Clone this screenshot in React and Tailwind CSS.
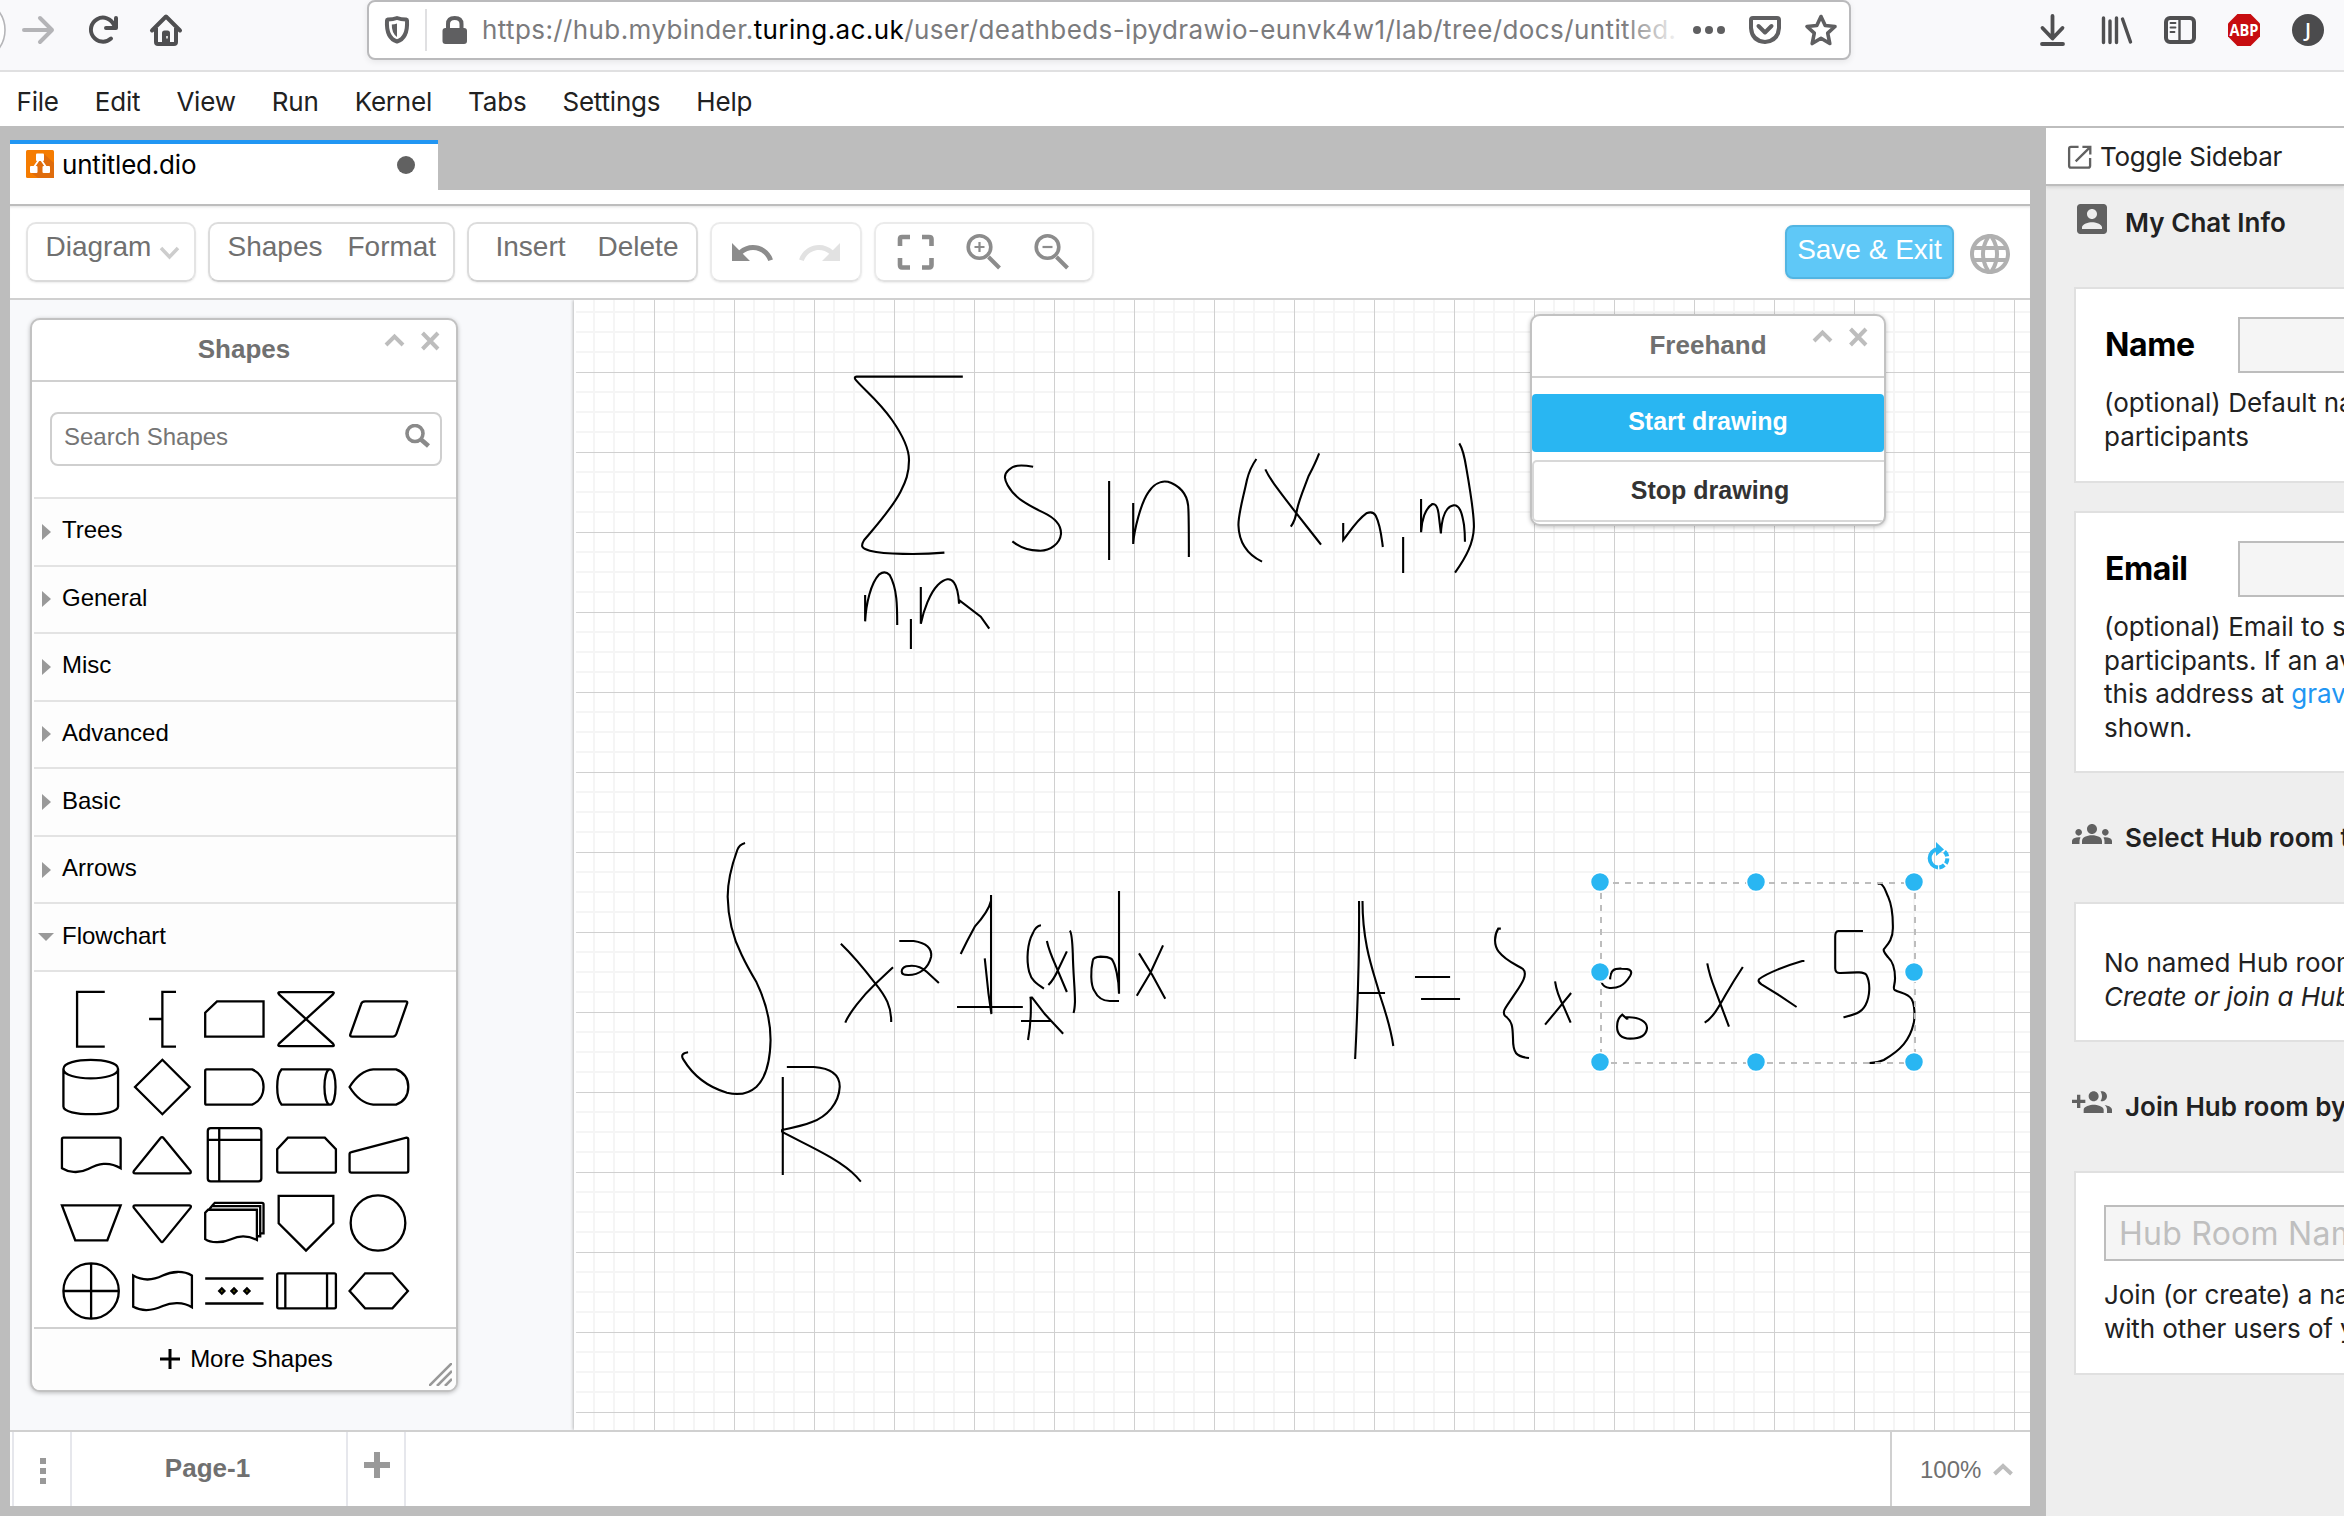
import React from "react";

const MENU = ["File", "Edit", "View", "Run", "Kernel", "Tabs", "Settings", "Help"];
const SECTIONS = ["Trees", "General", "Misc", "Advanced", "Basic", "Arrows", "Flowchart"];

const SHAPES = [
  "M40 -74H-35V75H40",
  "M38 -74H1V75H38M-35 0H1",
  "M-46 -48H80V48H-78V-17Z",
  "M-70 -73H72Q78 -73 73 -67L-73 67Q-78 74 -70 74H72Q78 74 73 67L-73 -67Q-78 -73 -70 -73Z",
  "M-35 -48H75Q80 -48 79 -43L50 40Q47 48 40 48H-70Q-77 48 -75 42L-46 -40Q-44 -48 -35 -48Z",
  "M-72 -49V53C-72 81 76 81 76 53V-49C76 -15 -72 -15 -72 -49C-72 -82 76 -82 76 -49",
  "M1 -74L75 0L1 74L-73 0Z",
  "M-74 -48H49C68 -40 80 -22 80 0S68 40 49 48H-74Q-78 48 -78 44V-44Q-78 -48 -74 -48Z",
  "M65 -48H-66C-82 -30 -82 30 -66 48H65C45 48 45 -48 65 -48C85 -48 85 48 65 48",
  "M-77 0Q-50 -44 -13 -48H49C70 -40 82 -22 82 0S70 40 49 48H-13Q-50 44 -77 0Z",
  "M-76 36V-43Q-76 -47 -72 -47H79Q83 -47 83 -43V36C50 16 22 24 -5 38S-60 46 -76 36Z",
  "M-4 -46Q0 -51 4 -46L77 43Q80 50 74 50H-72Q-80 50 -76 43Z",
  "M-63 -73H66Q74 -73 74 -65V64Q74 72 66 72H-63Q-71 72 -71 64V-65Q-71 -73 -63 -73ZM-40 -73V72M-71 -41H74",
  "M-49 -47H51L81 -16V44Q81 48 76 48H-73Q-78 48 -78 43V-16Z",
  "M-72 -8L77 -47Q82 -47 82 -42V43Q82 48 77 48H-72Q-77 48 -77 43V-2Q-77 -7 -72 -8Z",
  "M-76 -48H83L47 47H-40Z",
  "M-72 -48H74Q81 -47 77 -41L3 50Q0 54 -3 50L-76 -41Q-80 -48 -72 -48Z",
  "M-78 44V-28L-70 -36H62V46C38 34 14 34 -8 44S-62 56 -78 44ZM-68 -36L-60 -46H71V36H64M-60 -46L-52 -55H76Q80 -55 80 -51V28H72",
  "M-74 -74H74V1L0 75L-74 1Z",
  "M0 -75A74 75 0 0 1 0 75A74 75 0 0 1 0 -75Z",
  "M3 -75A75 75 0 0 1 3 75A75 75 0 0 1 3 -75ZM3 -75V75M-72 0H78",
  "M-78 -42C-50 -26 -22 -30 2 -42S58 -56 81 -42V44C58 30 26 30 2 41S-50 58 -78 43Z",
  "M-78 -34H80M-78 34H80M-33 -7L-26 0L-33 7L-40 0ZM0 -7L7 0L0 7L-7 0ZM35 -7L42 0L35 7L28 0Z",
  "M-74 -48H77Q81 -48 81 -44V43Q81 47 77 47H-74Q-78 47 -78 43V-44Q-78 -48 -74 -48ZM-56 -48V47M57 -48V47",
  "M-77 0L-35 -48H39L81 0L39 47H-35Z",
];

const FORMULA_SUM = [
  "M345 110H120Q113 111 119 121C140 155 165 180 195 240C222 295 231 330 231 360C231 400 224 425 213 455C195 505 160 560 136 600C128 618 130 626 148 632C180 643 250 645 306 638",
  "M138 765V844C140 790 150 730 168 703Q180 690 190 705C206 745 206 800 206 855",
  "M235 837V927",
  "M256 741V851C262 810 275 760 292 735Q315 705 326 727C334 742 336 765 337 791L338 781L383 830L401 866",
  "M494 380C465 373 452 376 442 390C430 405 434 420 440 436C455 475 485 497 515 517C545 537 554 560 553 582C551 610 530 635 505 632C485 631 465 621 450 604",
  "M655 423V660",
  "M706 489V612C708 570 722 490 738 457C755 420 775 422 787 429C815 447 823 480 823 510Q824 540 824 651",
  "M967 357Q953 385 947 420C938 480 929 520 929 555C930 610 950 645 979 665",
  "M986 388Q995 415 1015 452C1040 500 1080 570 1104 614M1100 340Q1092 370 1078 407C1068 445 1057 480 1053 510Q1050 540 1040 560",
  "M1151 549V600C1165 575 1180 540 1200 520Q1214 512 1220 527C1230 555 1232 590 1235 621",
  "M1278 591V699",
  "M1316 477V577C1317 540 1325 505 1340 492Q1350 490 1353 520L1358 580C1360 530 1368 500 1385 496C1400 494 1404 530 1407 555Q1409 580 1409 605",
  "M1397 310Q1406 330 1412 385C1420 450 1428 520 1428 560C1427 610 1412 650 1388 698",
];

const FORMULA_INTEGRAL = [
  "M284 69Q268 74 263 90C245 145 237 190 237 230C238 290 250 350 275 405Q290 440 315 487C338 540 353 600 353 660C352 720 343 770 315 800C290 825 260 825 235 818C180 800 140 760 117 718Q107 700 130 697",
  "M386 771V1065M397 741H470C510 744 540 760 540 800C538 850 505 890 465 906C440 917 410 924 384 930V935C430 965 540 1015 585 1070L597 1085",
  "M543 371C575 405 605 445 636 490C665 530 680 560 679 606M684 442L636 492C600 530 565 580 555 608",
  "M701 363H740C770 368 790 380 787 410C780 445 755 465 725 465C700 465 705 445 720 439C740 434 760 440 775 455L808 489",
  "M867 402Q885 360 905 320C925 295 945 262 949 242M949 225V560M932 415L942 520L950 582L949 540M857 561H1035",
  "M1056 530Q1059 600 1049 660M1053 534L1060 533L1095 583L1144 641M1030 603H1111",
  "M1084 316Q1070 318 1062 340C1047 370 1044 420 1052 455C1058 480 1070 490 1092 506",
  "M1100 363Q1105 390 1125 440L1154 516M1154 394L1130 450Q1118 480 1104 495",
  "M1162 332Q1168 340 1170 400C1171 460 1176 510 1176 545Q1175 570 1172 579",
  "M1295 213V521C1295 480 1285 430 1275 417Q1265 410 1245 410Q1225 411 1224 422C1218 450 1218 495 1228 512C1238 535 1255 543 1270 543H1295",
  "M1349 400L1385 465L1420 536M1414 376L1380 458L1343 527",
];

const FORMULA_SET = [
  "M90 243C91 400 87 560 81 717M98 243C98 380 125 460 138 525C155 590 165 640 169 678M86 519H150",
  "M219 471H300M233 537H323",
  "M417 326H411C402 345 400 375 412 395C430 425 455 435 468 447C482 465 460 500 445 530C430 560 418 575 427 588C445 605 444 625 445 655C445 700 452 710 482 714",
  "M542 484Q546 520 562 560L578 608M579 519L550 565L519 614",
  "M669 478C670 450 678 445 695 446C715 446 722 452 715 468C700 500 685 505 668 504C656 502 652 497 650 489",
  "M709 599L708 592C735 590 755 605 754 625C752 650 735 656 715 656C695 655 685 645 685 620Q685 595 697 584L708 597",
  "M893 430Q898 465 910 505L943 620M975 441Q955 480 935 525C920 560 905 595 887 608",
  "M1117 423H1112C1075 437 1030 460 1013 477Q1008 484 1018 493L1060 527L1099 561",
  "M1252 333H1195Q1188 334 1188 350V445Q1188 460 1200 459C1240 456 1255 455 1260 465C1270 490 1268 530 1258 555C1248 580 1230 585 1207 592",
  "M1286 191H1292C1303 198 1304 215 1310 230C1322 265 1321 300 1321 325C1321 360 1308 375 1300 388C1298 395 1305 403 1310 412C1325 430 1326 460 1326 475C1326 495 1320 505 1325 510C1340 520 1355 520 1364 537C1372 555 1372 590 1369 610C1360 660 1340 690 1300 720C1290 726 1280 729 1267 729",
];

const HANDLES = [
  [1600, 882], [1756, 882], [1914, 882],
  [1600, 972], [1914, 972],
  [1600, 1062], [1756, 1062], [1914, 1062],
];

function Strokes({ paths, transform }) {
  return (
    <g transform={transform} fill="none" stroke="#000" strokeWidth="2.100">
      {paths.map((d) => (
        <path key={d} d={d} vectorEffect="non-scaling-stroke" />
      ))}
    </g>
  );
}

function BrowserBar() {
  return (
    <header className="flex h-[72px] shrink-0 items-start border-b-2 border-[#e0e0e1] bg-[#f9f9fb] text-[#4f4f51]">
      <svg width="367" height="60" viewBox="0 0 367 60" fill="none" className="shrink-0">
        <circle cx="-26" cy="30" r="31" fill="#fff" stroke="#b5b5b8" strokeWidth="1.6" />
        <path d="M24 30H52M40 18L52 30L40 42" stroke="#b4b4b7" strokeWidth="4" strokeLinecap="round" strokeLinejoin="round" />
        <path d="M111 38.500A12 12 0 1 1 114 25" stroke="currentColor" strokeWidth="4" strokeLinecap="round" />
        <path d="M116 18V28H106" stroke="currentColor" strokeWidth="4" strokeLinecap="round" strokeLinejoin="round" />
        <path d="M152 30.500L166 16.500L180 30.500" stroke="currentColor" strokeWidth="4" strokeLinecap="round" strokeLinejoin="round" />
        <path d="M156 28V42Q156 44 158 44H174Q176 44 176 42V28" stroke="currentColor" strokeWidth="4" />
        <path d="M162 44V33Q162 30.500 164.500 30.500H167.500Q170 30.500 170 33V44Z" fill="currentColor" />
        <path d="M167 36V38.500" stroke="#fff" strokeWidth="1.500" />
      </svg>
      <div className="flex h-[60px] w-[1484px] shrink-0 items-center rounded-lg border-2 border-[#bababc] bg-white shadow-[0_2px_6px_rgba(0,0,0,0.08)]">
        <svg width="112" height="56" viewBox="369 2 112 56" fill="none" className="shrink-0">
          <path d="M387 20.500Q387 19.700 388 19.500Q393 19.500 397 18Q401 19.500 406 19.500Q407 19.700 407 20.500Q408 38 397 41.500Q386 38 387 20.500Z" stroke="#5f5f61" strokeWidth="4" strokeLinejoin="round" />
          <path d="M397 23.500V37Q391.500 33 391.800 24.500Q394.500 24.500 397 23.500Z" fill="#5f5f61" />
          <path d="M426 9V51" stroke="#e0e0e2" strokeWidth="2" />
          <rect x="442.500" y="28" width="24.500" height="16" rx="3" fill="#5f5f61" />
          <path d="M448 29V24Q448 18 454.700 18Q461.500 18 461.500 24V29" stroke="#5f5f61" strokeWidth="4" />
        </svg>
        <div className="relative w-[1201px] shrink-0 overflow-hidden whitespace-nowrap pl-px font-['Inter'] text-[26px] leading-[40px] tracking-[0.4px] text-[#7b7b7d]">
          https://hub.mybinder.<span className="text-black">turing.ac.uk</span>/user/deathbeds-ipydrawio-eunvk4w1/lab/tree/docs/untitled.
          <div className="absolute right-0 top-0 h-full w-[60px] bg-gradient-to-r from-white/0 to-white" />
        </div>
        <svg width="167" height="56" viewBox="1682 2 167 56" fill="none" className="shrink-0">
          <g fill="#5f5f61">
            <circle cx="1697" cy="30" r="4" />
            <circle cx="1709" cy="30" r="4" />
            <circle cx="1721" cy="30" r="4" />
          </g>
          <g stroke="#5f5f61" strokeWidth="4" strokeLinejoin="round" strokeLinecap="round">
            <path d="M1753 18H1777Q1779 18 1779 20V28Q1778 41 1765 42Q1752 41 1751 28V20Q1751 18 1753 18Z" />
            <path d="M1758.500 26L1765 32.500L1771.500 26" />
            <path d="M1821 16.500L1825.200 25.500L1835 26.500L1827.700 33.200L1829.800 43.500L1821 38.300L1812.200 43.500L1814.300 33.200L1807 26.500L1816.800 25.500Z" strokeWidth="3.600" />
          </g>
        </svg>
      </div>
      <svg width="493" height="60" viewBox="1851 0 493 60" fill="none" className="shrink-0">
        <g stroke="#4f4f51" strokeLinecap="round" strokeLinejoin="round">
          <path d="M2052.500 16V37M2042.500 28L2052.500 38.500L2062.500 28M2042 44H2063" strokeWidth="3.800" />
          <path d="M2103.500 18V42.500M2110 21V42.500M2116.500 18V42.500M2122.500 19L2130.500 42" strokeWidth="3.400" />
          <rect x="2166" y="18" width="28" height="24" rx="4" strokeWidth="4" />
          <path d="M2179.500 18V42" strokeWidth="2.400" />
          <path d="M2170.500 23H2175.500M2170.500 27.500H2175.500M2170.500 32H2174.500" strokeWidth="1.800" />
        </g>
        <path d="M2237.400 14H2250.600L2260 23.400V36.600L2250.600 46H2237.400L2228 36.600V23.400Z" fill="#c70d10" />
        <text x="2244" y="36" textAnchor="middle" fill="#fff" fontSize="16.500" fontWeight="700" fontFamily="Open Sans, sans-serif" textLength="29" lengthAdjust="spacingAndGlyphs">ABP</text>
        <circle cx="2308" cy="30" r="16" fill="#4b4b4d" />
        <text x="2308" y="37" textAnchor="middle" fill="#fff" fontSize="20" fontWeight="600" fontFamily="Open Sans, sans-serif">J</text>
      </svg>
    </header>
  );
}

function WindowButtons() {
  return (
    <svg width="56" height="22" viewBox="0 0 56 22" fill="none" stroke="#bdbdbd" strokeWidth="4" className="absolute right-[16px] top-[10px]">
      <path d="M2 15L10.500 6.500L19 15" />
      <path d="M38.500 3L54 19M54 3L38.500 19" />
    </svg>
  );
}

function Window({ title, className, children }) {
  return (
    <section className={"absolute flex flex-col overflow-hidden rounded-[10px] border-2 border-[#c2c2c2] bg-white shadow-[0_1px_4px_rgba(0,0,0,0.25)] " + className}>
      <div className="relative flex h-[62px] shrink-0 items-center justify-center border-b-2 border-[#d0d0d0] pb-[2px] text-[26px] font-bold text-[#707070]">
        {title}
        <WindowButtons />
      </div>
      {children}
    </section>
  );
}

function ShapesWindow() {
  return (
    <Window title="Shapes" className="left-[20px] top-[18px] h-[1074px] w-[428px]">
      <div className="ml-[2px] flex h-[117px] shrink-0 items-start border-b-2 border-[#e3e3e3] pl-4 pt-[30px]">
        <div className="flex h-[54px] w-[392px] items-center justify-between rounded-lg border-2 border-[#cfcfcf] bg-white pb-[5px] pl-3 pr-2.5 text-[24px] text-[#757575]">
          Search Shapes
          <svg width="26" height="26" viewBox="0 0 26 26" fill="none" stroke="#8a8a8a">
            <circle cx="11" cy="9.500" r="8" strokeWidth="3.600" />
            <path d="M17 15.500L24.500 22" strokeWidth="4.600" />
          </svg>
        </div>
      </div>
      <div className="ml-[2px] grid h-[473px] shrink-0 grid-rows-7">
        {SECTIONS.map((s) => (
          <div key={s} className="flex items-center border-b-2 border-[#e3e3e3] bg-[#fdfdfd] pl-1 text-[24px] text-black">
            <svg width="24" height="16" viewBox="0 0 24 16" fill="#999" className="shrink-0">
              {s === "Flowchart" ? <path d="M0 4H16L8 12Z" /> : <path d="M4 0V16L13 8Z" />}
            </svg>
            <span className="pb-[3px]">{s}</span>
          </div>
        ))}
      </div>
      <div className="ml-[2px] grid h-[355px] shrink-0 grid-cols-[repeat(5,72px)] grid-rows-[repeat(5,68px)] pl-5 pt-[13px]">
        {SHAPES.map((d, i) => (
          <svg key={i} width="72" height="68" viewBox="-97.500 -92.500 195 185" preserveAspectRatio="none" fill="none" stroke="#000" strokeWidth="2.300">
            <path d={d} vectorEffect="non-scaling-stroke" fill={i === 22 ? "#770" : "none"} />
          </svg>
        ))}
      </div>
      <div className="relative ml-[2px] flex flex-1 items-center justify-center gap-[10px] border-t-2 border-[#d0d0d0] bg-[#fdfdfd] pb-px pl-[3px] text-[24px] text-black">
        <svg width="20" height="20" viewBox="0 0 20 20" stroke="#000" strokeWidth="3">
          <path d="M10 0V20M0 10H20" />
        </svg>
        More Shapes
        <svg width="23" height="23" viewBox="0 0 23 23" stroke="#999" strokeWidth="2.600" className="absolute bottom-[4px] right-[4px]">
          <path d="M0 23L23 0M8 23L23 8M16 23L23 16" />
        </svg>
      </div>
    </Window>
  );
}

function FreehandWindow() {
  return (
    <Window title="Freehand" className="left-[1520px] top-[14px] h-[212px] w-[356px]">
      <div className="mt-4 flex h-[58px] shrink-0 items-center justify-center rounded bg-[#29b6f2] pb-[2px] text-[25px] font-bold text-white">
        Start drawing
      </div>
      <div className="mr-[-4px] mt-2 flex h-[62px] shrink-0 items-center justify-center rounded-[5px] border-2 border-[#d8d8d8] pb-px text-[25px] font-bold text-[#333]">
        Stop drawing
      </div>
    </Window>
  );
}

function Group({ className, children }) {
  return (
    <div className={"flex h-[60px] shrink-0 items-start rounded-[10px] border-2 shadow-[0_1px_2px_rgba(0,0,0,0.08)] " + className}>
      {children}
    </div>
  );
}

function EditorToolbar() {
  return (
    <div className="flex h-[96px] shrink-0 items-start gap-3 border-b-2 border-t-2 border-b-[#d0d0d0] border-t-[#bdbdbd] bg-white pl-4 pt-4 text-[28px] leading-[46px] text-[#707070] shadow-[inset_0_3px_3px_-2px_rgba(0,0,0,0.12)]">
      <Group className="w-[170px] border-[#e4e4e4] border-b-[#dadada] pl-[17.500px]">
        Diagram
        <svg width="22" height="14" viewBox="0 0 22 14" fill="none" stroke="#cdcdcd" strokeWidth="3.500" className="ml-[8px] mt-[22px]">
          <path d="M2 2L10.500 11L19 2" />
        </svg>
      </Group>
      <Group className="w-[247px] gap-[25px] border-[#dcdcdc] border-b-[#cfcfcf] pl-[17.500px]">
        <span>Shapes</span>
        <span>Format</span>
      </Group>
      <Group className="w-[231px] gap-[32px] border-[#dcdcdc] border-b-[#cfcfcf] pl-[26.500px]">
        <span>Insert</span>
        <span>Delete</span>
      </Group>
      <Group className="w-[152px] border-[#ebebeb] border-b-[#e2e2e2]">
        <svg width="148" height="56" viewBox="712 224 148 56">
          <g transform="translate(728 229) scale(2)" fill="#8c8c8c">
            <path d="M12.500 8c-2.650 0-5.050.990-6.900 2.600L2 7v9h9l-3.620-3.620c1.390-1.160 3.160-1.880 5.120-1.880 3.540 0 6.550 2.310 7.600 5.500l2.370-.780C21.080 11.030 17.150 8 12.500 8z" />
          </g>
          <g transform="translate(844 229) scale(-2 2)" fill="#e2e2e2">
            <path d="M12.500 8c-2.650 0-5.050.990-6.900 2.600L2 7v9h9l-3.620-3.620c1.390-1.160 3.160-1.880 5.120-1.880 3.540 0 6.550 2.310 7.600 5.500l2.370-.780C21.080 11.030 17.150 8 12.500 8z" />
          </g>
        </svg>
      </Group>
      <Group className="w-[220px] border-[#ebebeb] border-b-[#e2e2e2]">
        <svg width="216" height="56" viewBox="876 224 216 56" fill="none" stroke="#8c8c8c">
          <path d="M900 246V239Q900 237 902 237H910M922 237H929Q931.500 237 931.500 239V246M931.500 258V265Q931.500 267.500 929 267.500H922M910 267.500H902Q900 267.500 900 265V258" strokeWidth="4.600" />
          <circle cx="979.500" cy="247" r="11.300" strokeWidth="3.600" />
          <path d="M988.500 257L999.500 268" strokeWidth="4" />
          <path d="M974.500 247H984.500M979.500 242V252" strokeWidth="2.200" />
          <circle cx="1047.500" cy="247" r="11.300" strokeWidth="3.600" />
          <path d="M1056.500 257L1067.500 268" strokeWidth="4" />
          <path d="M1042.500 247H1052.500" strokeWidth="2.200" />
        </svg>
      </Group>
      <div className="ml-auto mt-[3px] flex h-[54px] w-[169px] shrink-0 items-start justify-center rounded-lg border-2 border-[#52b5e2] bg-[#5fc8f7] text-white shadow-[0_1px_3px_rgba(0,0,0,0.12)]">
        Save &amp; Exit
      </div>
      <svg width="48" height="48" viewBox="0 0 24 24" fill="#b0b0b0" className="mr-[16px] mt-[8px] shrink-0">
        <path d="M11.990 2C6.470 2 2 6.480 2 12s4.470 10 9.990 10C17.520 22 22 17.520 22 12S17.520 2 11.990 2zm6.930 6h-2.950c-.320-1.250-.780-2.450-1.380-3.560 1.840.630 3.370 1.910 4.330 3.560zM12 4.040c.830 1.200 1.480 2.530 1.910 3.960h-3.820c.430-1.430 1.080-2.760 1.910-3.960zM4.260 14C4.100 13.360 4 12.690 4 12s.1-1.360.260-2h3.380c-.080.660-.140 1.320-.140 2s.060 1.340.140 2H4.260zm.820 2h2.950c.320 1.250.780 2.450 1.380 3.560-1.840-.630-3.370-1.900-4.330-3.560zm2.950-8H5.080c.960-1.660 2.490-2.930 4.330-3.560C8.810 5.550 8.350 6.750 8.030 8zM12 19.960c-.830-1.200-1.480-2.530-1.910-3.960h3.820c-.430 1.430-1.080 2.760-1.910 3.960zM14.340 14H9.660c-.090-.660-.160-1.320-.160-2s.070-1.350.160-2h4.680c.090.650.160 1.320.160 2s-.070 1.340-.160 2zm.250 5.560c.6-1.110 1.060-2.310 1.380-3.560h2.950c-.960 1.650-2.490 2.930-4.330 3.560zM16.360 14c.080-.660.140-1.320.140-2s-.060-1.340-.140-2h3.380c.160.640.260 1.310.260 2s-.1 1.360-.260 2h-3.380z" />
      </svg>
    </div>
  );
}

function Canvas() {
  return (
    <svg width="1456" height="1130" viewBox="574 300 1456 1130" className="block shrink-0 bg-white shadow-[-1px_0_3px_rgba(0,0,0,0.25)]">
      <defs>
        <pattern id="grid" x="654" y="372" width="80" height="80" patternUnits="userSpaceOnUse">
          <path d="M20 0V80M40 0V80M60 0V80M0 20H80M0 40H80M0 60H80" stroke="#f5f5f5" strokeWidth="2" />
          <path d="M0.500 0V80M0 0.500H80" stroke="#d0d0d0" strokeWidth="1" />
        </pattern>
      </defs>
      <rect x="576" y="300" width="1454" height="1130" fill="url(#grid)" />
      <Strokes paths={FORMULA_SUM} transform="translate(800 340) scale(0.47194 0.33333)" />
      <Strokes paths={FORMULA_INTEGRAL} transform="translate(640 820) scale(0.3699 0.33333)" />
      <Strokes paths={FORMULA_SET} transform="translate(1320 820) scale(0.43367 0.33333)" />
      <rect x="1601" y="883" width="314" height="180" fill="none" stroke="#bdbdbd" strokeWidth="2" strokeDasharray="6 6" />
      {HANDLES.map(([x, y]) => (
        <circle key={x + "-" + y} cx={x} cy={y} r="9.500" fill="#29b6f2" stroke="#fff" strokeWidth="1.500" />
      ))}
      <path d="M1938 867.500A9.300 9.300 0 0 1 1938 849" fill="none" stroke="#29b6f2" strokeWidth="4" />
      <path d="M1944.500 851.500A9.300 9.300 0 0 1 1938 867.500" fill="none" stroke="#29b6f2" strokeWidth="4" strokeDasharray="5.500 2" />
      <path d="M1936 842L1944 849.500L1936 856Z" fill="#29b6f2" />
    </svg>
  );
}

function PageTabs() {
  return (
    <div className="flex h-[76px] shrink-0 border-t-2 border-[#d0d0d0] bg-white pl-[2px]">
      <div className="flex w-[60px] items-center justify-center border-x-2 border-[#e6e7ec] pl-[2px] pt-1">
        <svg width="6" height="26" viewBox="0 0 6 26" fill="#999">
          <path d="M0 0H6V6H0ZM0 10H6V16H0ZM0 20H6V26H0Z" />
        </svg>
      </div>
      <div className="flex w-[276px] items-center justify-center border-r-2 border-[#e6e7ec] pb-[2px] pr-[3px] text-[26px] font-bold text-[#707070]">Page-1</div>
      <div className="flex w-[58px] items-center justify-center border-r-2 border-[#e6e7ec] pb-[9px] pl-[2px]">
        <svg width="26" height="26" viewBox="0 0 26 26" stroke="#999" strokeWidth="6">
          <path d="M13 0V26M0 13H26" />
        </svg>
      </div>
      <div className="ml-auto flex w-[140px] items-center border-l-2 border-[#d0d0d0] pl-[28px] pt-px text-[24px] text-[#707070]">
        100%
        <svg width="20" height="14" viewBox="0 0 20 14" fill="none" stroke="#bdbdbd" strokeWidth="4" className="ml-3">
          <path d="M1.500 11L10 3L18.500 11" />
        </svg>
      </div>
    </div>
  );
}

function Editor() {
  return (
    <main className="mb-[10px] ml-[10px] mr-4 flex w-[2020px] flex-col font-['Liberation_Sans']">
      <div className="flex h-[64px] shrink-0 items-end">
        <div className="flex h-[50px] w-[428px] items-start border-t-4 border-[#2196f3] bg-white pl-4 pr-[23px] font-['Inter'] text-[26px] leading-[42px] tracking-[-0.2px] text-black">
          <svg width="28" height="28" viewBox="0 0 28 28" className="mr-[8px] mt-[6px] shrink-0">
            <rect width="28" height="28" rx="1.500" fill="#f57c00" />
            <path d="M18 4L28 13V28H12L4 22L10 12Z" fill="#df6c0c" />
            <path d="M13.500 9L8 17M14.500 9L20 17" stroke="#fff" strokeWidth="1.800" />
            <rect x="10" y="3.500" width="8" height="7.500" rx="1" fill="#fff" />
            <rect x="4" y="16" width="7.500" height="7" rx="1" fill="#fff" />
            <rect x="16.500" y="16" width="7.500" height="7" rx="1" fill="#fff" />
          </svg>
          untitled.dio
          <div className="ml-auto mt-3 size-[18px] rounded-full bg-[#616161]" />
        </div>
      </div>
      <div className="h-[14px] shrink-0 bg-white" />
      <EditorToolbar />
      <div className="relative flex h-[1130px] shrink-0 justify-end overflow-hidden bg-[#f8f9fb]">
        <Canvas />
        <ShapesWindow />
        <FreehandWindow />
      </div>
      <PageTabs />
    </main>
  );
}

function Heading({ path, tall, children }) {
  return (
    <div className={"flex shrink-0 gap-[13px] pl-[26px] " + (tall ? "h-[129px] pt-[41px]" : "h-[101px] pt-[13px]")}>
      <svg width="40" height="40" viewBox="0 0 24 24" fill="#616161" className="shrink-0">
        <path d={path} />
      </svg>
      <h2 className="whitespace-nowrap pt-[7px] text-[26px] font-semibold leading-[34px] tracking-[0.05px]">{children}</h2>
    </div>
  );
}

function Field({ label, className, children }) {
  return (
    <div className={"ml-7 shrink-0 border-2 border-r-0 border-[#e0e0e0] bg-white pl-[29px] pt-7 " + className}>
      <div className="flex items-center">
        <b className="w-[133px] text-[32px] leading-[56px] tracking-[-0.4px] text-black">{label}</b>
        <div className="h-14 flex-1 border-2 border-r-0 border-[#bdbdbd] bg-[#f5f5f5]" />
      </div>
      <p className="ml-[-1px] mt-[13px] whitespace-nowrap leading-[33.600px]">{children}</p>
    </div>
  );
}

const ACCOUNT = "M3 5v14c0 1.100.890 2 2 2h14c1.100 0 2-.9 2-2V5c0-1.100-.9-2-2-2H5c-1.110 0-2 .9-2 2zm12 4c0 1.660-1.340 3-3 3s-3-1.340-3-3 1.340-3 3-3 3 1.340 3 3zm-9 8c0-2 4-3.100 6-3.100s6 1.100 6 3.100v1H6v-1z";
const GROUPS = "M12 12.750c1.630 0 3.070.390 4.240.9 1.080.480 1.760 1.560 1.760 2.730V18H6v-1.610c0-1.180.680-2.260 1.760-2.730 1.170-.520 2.610-.910 4.240-.910zM4 13c1.100 0 2-.9 2-2s-.9-2-2-2-2 .9-2 2 .9 2 2 2zm1.130 1.100c-.370-.060-.740-.1-1.130-.1-.990 0-1.930.210-2.780.580C.480 14.900 0 15.620 0 16.430V18h4.500v-1.610c0-.830.230-1.610.630-2.290zM20 13c1.100 0 2-.9 2-2s-.9-2-2-2-2 .9-2 2 .9 2 2 2zm4 3.430c0-.810-.480-1.530-1.220-1.850-.850-.370-1.790-.580-2.780-.580-.390 0-.760.040-1.130.1.4.680.630 1.460.630 2.290V18H24v-1.570zM12 6c1.660 0 3 1.340 3 3s-1.340 3-3 3-3-1.340-3-3 1.340-3 3-3z";
const GROUP_ADD = "M8 10H5V7H3v3H0v2h3v3h2v-3h3v-2zm10 1c1.660 0 2.990-1.340 2.990-3S19.660 5 18 5c-.320 0-.630.050-.910.140.570.810.9 1.790.9 2.860s-.340 2.040-.9 2.860c.280.090.590.140.910.140zm-5 0c1.660 0 2.990-1.340 2.990-3S14.660 5 13 5c-1.660 0-3 1.340-3 3s1.340 3 3 3zm6.620 2.160c.830.730 1.380 1.660 1.380 2.840v2h3v-2c0-1.540-2.370-2.490-4.380-2.840zM13 13c-2 0-6 1-6 3v2h12v-2c0-2-4-3-6-3z";

function Sidebar() {
  return (
    <aside className="flex w-[298px] shrink-0 flex-col overflow-hidden bg-[#eee] font-['Inter'] text-[26px] text-[#212121]">
      <div className="z-10 flex h-[60px] shrink-0 items-center gap-[7px] whitespace-nowrap border-b-2 border-t-2 border-[#bdbdbd] bg-white pl-[21px] pt-px tracking-[-0.25px] shadow-[0_1px_4px_rgba(0,0,0,0.15)]">
        <svg width="26" height="26" viewBox="0 0 27 26" fill="none" stroke="#616161" strokeWidth="2.400" className="shrink-0">
          <path d="M12 2.500H4Q2.200 2.500 2.200 4.500V22Q2.200 24 4 24H22Q24 24 24 22V14M16 2.500H24.200V10.500M24 2.700L9 17.500" />
        </svg>
        Toggle Sidebar
      </div>
      <Heading path={ACCOUNT}>My Chat Info</Heading>
      <Field label="Name" className="h-[196px]">
        (optional) Default na
        <br />
        participants
      </Field>
      <Field label="Email" className="mt-7 h-[262px]">
        (optional) Email to s
        <br />
        participants. If an av
        <br />
        this address at <span className="text-[#2196f3]">grav</span>
        <br />
        shown.
      </Field>
      <Heading path={GROUPS} tall>Select Hub room t</Heading>
      <div className="ml-7 h-[140px] shrink-0 whitespace-nowrap border-2 border-r-0 border-[#e0e0e0] bg-white pl-[28px] pt-[42px] leading-[33.500px]">
        No named Hub room
        <br />
        <i>Create or join a Hub</i>
      </div>
      <Heading path={GROUP_ADD} tall>Join Hub room by</Heading>
      <div className="ml-7 h-[204px] shrink-0 whitespace-nowrap border-2 border-r-0 border-[#e0e0e0] bg-white pl-7 pt-8">
        <div className="h-14 border-2 border-r-0 border-[#bdbdbd] bg-[#f5f5f5] pl-[13px] text-[32px] leading-[54px] tracking-[0.25px] text-[#bfbfbf]">Hub Room Name</div>
        <p className="pt-[17px] leading-[33.700px] tracking-[-0.1px]">
          Join (or create) a na
          <br />
          with other users of y
        </p>
      </div>
    </aside>
  );
}

export default function App() {
  return (
    <div className="flex h-[1516px] w-[2344px] flex-col overflow-hidden bg-white">
      <BrowserBar />
      <nav className="flex h-[54px] shrink-0 items-center gap-[36px] pl-[16.500px] pt-[6px] font-['Inter'] text-[26px] leading-[44px] tracking-[-0.2px] text-[#212121]">
        {MENU.map((m) => (
          <span key={m}>{m}</span>
        ))}
      </nav>
      <div className="flex h-[1390px] shrink-0 bg-[#bdbdbd]">
        <Editor />
        <Sidebar />
      </div>
    </div>
  );
}
